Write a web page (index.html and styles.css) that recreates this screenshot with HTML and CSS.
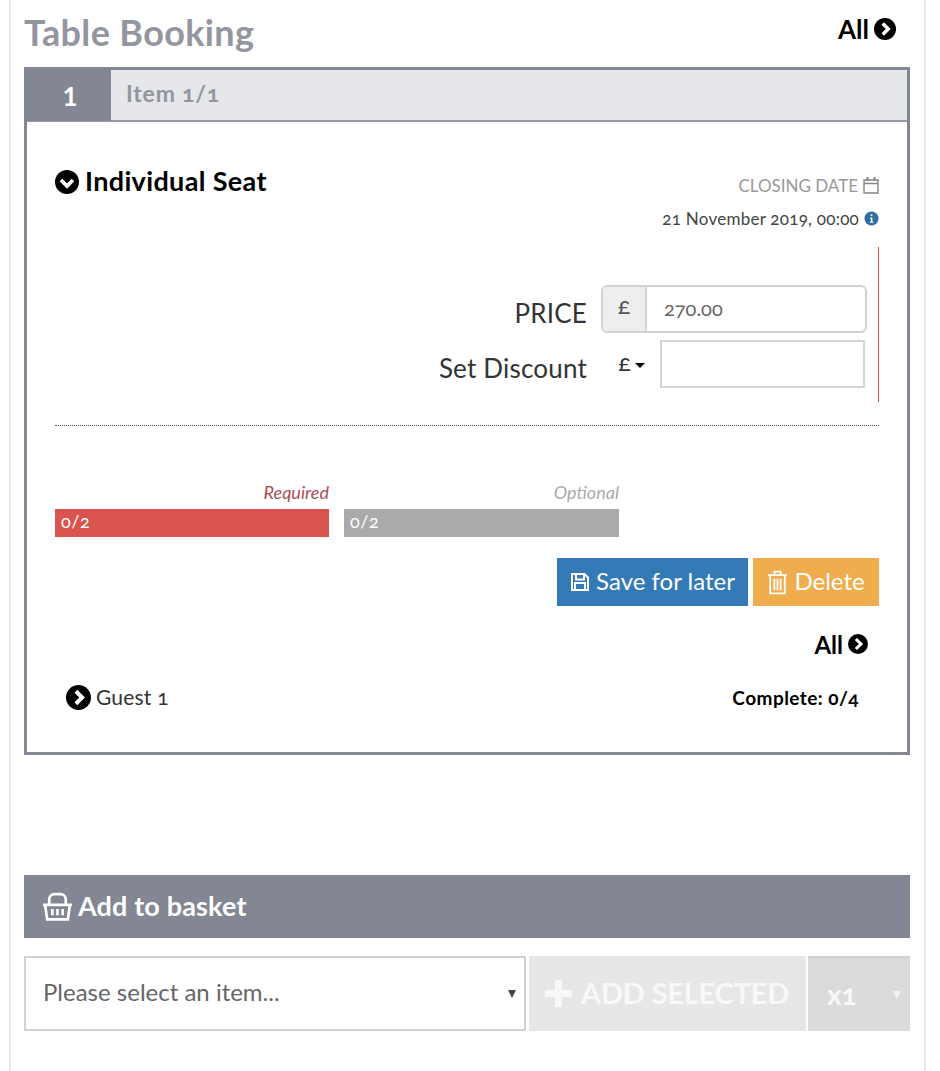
FILE: index.html
```html
<!DOCTYPE html>
<html lang="en">
<head>
    <meta charset="UTF-8" />
    <meta name="viewport" content="width=device-width, initial-scale=1.0" />
    <title>Table Booking</title>
    <link rel="stylesheet" href="styles.css">
</head>
<body>
    <svg class="icon-defs" width="0" height="0">
        <symbol id="circle-right" viewBox="0 0 24 24"><circle cx="12" cy="12" r="12" fill="#000"/><path d="M9.5 6l6 6-6 6" fill="none" stroke="#fff" stroke-width="3.8"/></symbol>
        <symbol id="circle-down" viewBox="0 0 24 24"><circle cx="12" cy="12" r="12" fill="#000"/><path d="M6 10l6 6 6-6" fill="none" stroke="#fff" stroke-width="3.8"/></symbol>
    </svg>

    <div class="page">
        <div class="title-row">
            <h1>Table Booking</h1>
            <a class="all-link">All <svg class="ic-all"><use href="#circle-right"/></svg></a>
        </div>

        <!-- Item panel -->
        <div class="panel">
            <div class="panel-head">
                <div class="panel-num">1</div>
                <div class="panel-item">Item 1/1</div>
            </div>

            <div class="panel-body">
                <div class="seat-row">
                    <h2 class="seat-name"><svg class="ic-seat"><use href="#circle-down"/></svg> Individual Seat</h2>
                    <div class="closing">
                        <div class="closing-label">CLOSING DATE
                            <svg class="ic-cal" viewBox="0 0 16 18"><path d="M1 4h14v13H1zM1 7.5h14" fill="none" stroke="#858585" stroke-width="1.4"/><path d="M4.5 1v4M11.5 1v4" fill="none" stroke="#858585" stroke-width="2"/></svg>
                        </div>
                        <div class="closing-date">21 November 2019, 00:00
                            <svg class="ic-info" viewBox="0 0 16 16"><circle cx="8" cy="8" r="7.5" fill="#2f6f9f"/><path d="M6.5 7h2.400v4.200h1v1.200H6.300v-1.200h1V8.200h-.8zM7.200 3.400h1.700v2H7.200z" fill="#fff"/></svg>
                        </div>
                    </div>
                </div>

                <div class="price-block">
                    <div class="price-row">
                        <label>PRICE</label>
                        <div class="price-group">
                            <span class="price-addon">£</span>
                            <span class="price-value">270.00</span>
                        </div>
                    </div>
                    <div class="discount-row">
                        <label>Set Discount</label>
                        <span class="discount-cur">£<i class="caret"></i></span>
                        <span class="discount-input"></span>
                    </div>
                </div>

                <div class="dotted"></div>

                <div class="progress-row">
                    <div class="progress-col col-req">
                        <div class="progress-label">Required</div>
                        <div class="bar bar-red">0/2</div>
                    </div>
                    <div class="progress-col col-opt">
                        <div class="progress-label label-opt">Optional</div>
                        <div class="bar bar-grey">0/2</div>
                    </div>
                </div>

                <div class="btn-row">
                    <button class="btn btn-save">
                        <svg class="ic-btn" viewBox="0 0 20 20"><path d="M2 2h12.5l3.5 3.5V18H2z M6 2v5.500h8V2 M5 18v-7h10v7" fill="none" stroke="#fff" stroke-width="2"/></svg>
                        <span class="btn-text">Save for later</span>
                    </button>
                    <button class="btn btn-delete">
                        <svg class="ic-btn ic-trash" viewBox="0 0 20 24"><path d="M1 5h18M7 5V1.500h6V5M3 5v17.500h14V5M7 8.500v11M10 8.500v11M13 8.500v11" fill="none" stroke="#fff" stroke-width="1.7"/></svg>
                        <span class="btn-text">Delete</span>
                    </button>
                </div>

                <div class="all-row">
                    <a class="all-link all-small">All <svg class="ic-all-small"><use href="#circle-right"/></svg></a>
                </div>

                <div class="guest-row">
                    <div class="guest"><svg class="ic-guest"><use href="#circle-right"/></svg> <span class="guest-name">Guest 1</span></div>
                    <div class="complete">Complete: 0/4</div>
                </div>
            </div>
        </div>

        <!-- Basket -->
        <div class="basket-bar">
            <svg class="ic-basket" viewBox="0 0 30 28"><path d="M1 12.500h28M3 12.500l2 14h20l2-14M7 12.500V7a5 5 0 0 1 5-5h6a5 5 0 0 1 5 5v5.500M10 16.500v6M15 16.500v6M20 16.500v6" fill="none" stroke="#fff" stroke-width="2.6"/></svg>
            <span class="basket-title">Add to basket</span>
        </div>
        <div class="basket-row">
            <div class="item-select"><span class="select-text">Please select an item...</span><i class="sel-arrow"></i></div>
            <button class="add-btn">
                <svg class="ic-plus" viewBox="0 0 27 27"><path d="M10 0h7v10h10v7H17v10h-7V17H0v-7h10z" fill="#f8f8f8"/></svg>
                <span class="add-text">ADD SELECTED</span>
            </button>
            <div class="qty"><span class="qty-text">x1</span><i class="sel-arrow arrow-light"></i></div>
        </div>
    </div>
</body>
</html>
```

FILE: styles.css
```css
* {
    box-sizing: border-box;
}

body {
    margin: 0;
    background: #fff;
    font-family: Lato, "Open Sans", sans-serif;
    color: #333;
    font-variant-numeric: oldstyle-nums;
}

.icon-defs {
    display: block;
}

.page {
    width: 917px;
    height: 1071px;
    margin-left: 9px;
    padding: 0 14px 0 13px;
    border-left: 2px solid #e8e8e8;
    border-right: 2px solid #e8e8e8;
    overflow: hidden;
}

.title-row {
    display: flex;
    justify-content: space-between;
    height: 67px;
}

h1 {
    margin: 12px 0 0;
    font-size: 36px;
    line-height: 40px;
    font-weight: 700;
    letter-spacing: .35px;
    color: #93969f;
}

.all-link {
    display: flex;
    align-items: center;
    gap: 5px;
    height: 24px;
    margin: 17px 14px 0 0;
    font-size: 26px;
    font-weight: 700;
    color: #000;
}

.ic-all {
    width: 22px;
    height: 22px;
}

.panel {
    height: 688px;
    border: 3px solid #828793;
}

.panel-head {
    display: flex;
    height: 52px;
    background: #e6e7ea;
    border-bottom: 2px solid #969aa4;
}

.panel-num {
    width: 84px;
    margin-bottom: -1px;
    padding-top: 11px;
    padding-left: 2px;
    text-align: center;
    background: #828793;
    color: #fff;
    font-size: 26px;
    font-weight: 700;
    line-height: 30px;
    font-variant-numeric: lining-nums;
}

.panel-item {
    padding: 9px 0 0 15px;
    font-size: 23px;
    line-height: 28px;
    font-weight: 700;
    letter-spacing: .8px;
    color: #93969f;
}

.panel-body {
    padding: 0 28px;
}

.seat-row {
    display: flex;
    justify-content: space-between;
    height: 125px;
}

.seat-name {
    display: flex;
    align-items: center;
    gap: 6px;
    height: 32px;
    margin: 42px 0 0;
    font-size: 27px;
    font-weight: 700;
    letter-spacing: .35px;
    color: #000;
}

.ic-seat {
    width: 24px;
    height: 24px;
    margin-top: 4px;
}

.closing {
    margin-top: 51px;
    text-align: right;
    font-size: 17px;
}

.closing-label {
    display: flex;
    justify-content: flex-end;
    align-items: center;
    gap: 5px;
    height: 24px;
    color: #999;
}

.ic-cal {
    width: 16px;
    height: 18px;
}

.closing-date {
    display: flex;
    justify-content: flex-end;
    align-items: center;
    gap: 5px;
    height: 24px;
    margin-top: 9px;
    letter-spacing: .25px;
    color: #444;
}

.ic-info {
    width: 15px;
    height: 15px;
}

.price-block {
    height: 155px;
    padding: 38px 11px 0 0;
    border-right: 1px solid #e2504c;
}

.price-row,
.discount-row {
    display: flex;
    justify-content: flex-end;
    align-items: center;
    height: 48px;
}

.discount-row {
    margin-top: 7px;
}

label {
    padding-top: 8px;
    font-size: 26px;
    letter-spacing: .2px;
    color: #333;
}

.price-group {
    display: flex;
    width: 266px;
    height: 48px;
    margin-left: 14px;
    border: 2px solid #d2d2d2;
    border-radius: 6px;
    overflow: hidden;
    font-size: 20px;
}

.price-addon {
    width: 44px;
    padding-top: 3px;
    text-align: center;
    font-size: 24px;
    background: #eee;
    border-right: 2px solid #d2d2d2;
    color: #555;
}

.price-value {
    padding: 9px 0 0 17px;
    color: #666;
}

.discount-cur {
    display: flex;
    align-items: center;
    gap: 4px;
    width: 73px;
    padding: 0 0 6px 31px;
    font-size: 24px;
    color: #333;
}

.caret {
    width: 0;
    height: 0;
    margin-top: 8px;
    border-top: 5px solid #000;
    border-left: 5px solid transparent;
    border-right: 5px solid transparent;
}

.discount-input {
    width: 205px;
    height: 48px;
    margin-right: 2px;
    border: 2px solid #d4d4d4;
}

.dotted {
    margin-top: 23px;
    border-top: 1px dotted #555;
}

.progress-row {
    display: flex;
    gap: 15px;
    margin-top: 53px;
}

.col-req {
    width: 274px;
}

.col-opt {
    width: 275px;
}

.progress-label {
    height: 30px;
    text-align: right;
    font-size: 18px;
    line-height: 26px;
    font-style: italic;
    color: #a94d54;
}

.label-opt {
    color: #aaa;
}

.bar {
    height: 28px;
    padding-left: 6px;
    font-size: 18px;
    letter-spacing: .6px;
    line-height: 25px;
    color: #fff;
}

.bar-red {
    background: #d9534f;
}

.bar-grey {
    background: #aaa;
}

.btn-row {
    display: flex;
    justify-content: flex-end;
    gap: 5px;
    margin-top: 21px;
}

.btn {
    display: flex;
    align-items: center;
    justify-content: center;
    gap: 6px;
    height: 48px;
    border: 0;
    padding: 0;
    font-family: inherit;
    font-size: 24px;
    color: #fff;
}

.btn-text {
    padding-bottom: 4px;
}

.btn-save {
    width: 191px;
    background: #337ab7;
}

.btn-delete {
    width: 126px;
    background: #f0ad4e;
}

.ic-btn {
    width: 20px;
    height: 20px;
}

.ic-trash {
    width: 21px;
    height: 25px;
}

.all-row {
    display: flex;
    justify-content: flex-end;
    margin-top: 26px;
    height: 24px;
}

.all-small {
    margin: 0 11px 0 0;
    font-size: 24px;
}

.ic-all-small {
    width: 20px;
    height: 20px;
}

.guest-row {
    display: flex;
    justify-content: space-between;
    align-items: center;
    margin-top: 28px;
    padding: 0 20px 0 11px;
    height: 26px;
}

.guest {
    display: flex;
    align-items: center;
    gap: 5px;
    font-size: 21px;
    letter-spacing: .2px;
    color: #333;
}

.guest-name {
    padding-bottom: 2px;
}

.ic-guest {
    width: 25px;
    height: 25px;
}

.complete {
    font-size: 19px;
    font-weight: 700;
    letter-spacing: .45px;
    color: #000;
}

.basket-bar {
    display: flex;
    align-items: center;
    gap: 5px;
    height: 63px;
    margin-top: 120px;
    padding-left: 18px;
    background: #828793;
    color: #fff;
    font-size: 27px;
    font-weight: 700;
}

.basket-title {
    padding-bottom: 2px;
    letter-spacing: .15px;
}

.ic-basket {
    width: 31px;
    height: 29px;
}

.basket-row {
    display: flex;
    height: 75px;
    margin-top: 18px;
}

.item-select {
    display: flex;
    align-items: center;
    justify-content: space-between;
    width: 502px;
    padding: 0 8px 0 17px;
    border: 2px solid #d2d2d2;
    font-size: 24px;
    color: #666;
}

.select-text {
    padding-bottom: 4px;
}

.sel-arrow {
    width: 0;
    height: 0;
    border-top: 8px solid #444;
    border-left: 4px solid transparent;
    border-right: 4px solid transparent;
}

.arrow-light {
    border-top-color: #f2f2f2;
}

.add-btn {
    display: flex;
    align-items: center;
    gap: 9px;
    width: 277px;
    margin-left: 3px;
    border: 0;
    padding: 0 0 0 16px;
    background: #e7e7e7;
    color: #f8f8f8;
    font-family: inherit;
    font-size: 29px;
    font-weight: 700;
}

.add-text {
    padding-bottom: 3px;
    letter-spacing: -.2px;
}

.ic-plus {
    width: 27px;
    height: 27px;
}

.qty {
    display: flex;
    align-items: center;
    justify-content: space-between;
    width: 102px;
    margin-left: 2px;
    padding: 0 9px 0 19px;
    background: #dbdbdb;
    border-top: 2px solid #d0d0d0;
    color: #f8f8f8;
    font-size: 28px;
    font-weight: 700;
}

.qty-text {
    padding-bottom: 2px;
}
```
